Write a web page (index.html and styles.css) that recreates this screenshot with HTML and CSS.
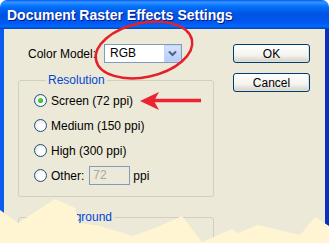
FILE: index.html
```html
<!DOCTYPE html>
<html lang="en">
<head>
    <meta charset="UTF-8">
    <title>Document Raster Effects Settings</title>
    <link rel="stylesheet" href="styles.css">
</head>
<body>
    <div class="window">
        <div class="titlebar">
            <span class="title">Document Raster Effects Settings</span>
        </div>
        <div class="client">
            <div class="main">
                <div class="model-row">
                    <span>Color Model:</span>
                    <div class="combo">
                        <span class="combo-value">RGB</span>
                        <span class="combo-btn">
                            <svg width="17" height="17" viewBox="0 0 17 17">
                                <path d="M5 6.5 L8.5 10 L12 6.5" fill="none" stroke="#4D6185" stroke-width="2"/>
                            </svg>
                        </span>
                    </div>
                </div>
                <fieldset class="group">
                    <legend>Resolution</legend>
                    <div class="radio-row"><span class="radio checked"></span>Screen (72 ppi)</div>
                    <div class="radio-row"><span class="radio"></span>Medium (150 ppi)</div>
                    <div class="radio-row"><span class="radio"></span>High (300 ppi)</div>
                    <div class="radio-row">
                        <span class="radio"></span>Other:
                        <span class="textbox">72</span>
                        <span class="unit">ppi</span>
                    </div>
                </fieldset>
                <fieldset class="group group-bg">
                    <legend>Background</legend>
                </fieldset>
            </div>
            <div class="buttons">
                <button class="btn">OK</button>
                <button class="btn">Cancel</button>
            </div>
        </div>
        <!-- annotations drawn over the screenshot -->
        <svg class="annot" width="329" height="243" viewBox="0 0 329 243">
            <ellipse cx="144" cy="50" rx="49" ry="27" transform="rotate(-12 144 50)" fill="none" stroke="#E5202B" stroke-width="2.5"/>
            <line x1="154" y1="100.5" x2="201" y2="100.5" stroke="#EC2330" stroke-width="3.5"/>
            <polygon points="140,101 159,92 154,101 159,110" fill="#EC2330"/>
            <polygon class="torn" points="0,210 18,223 55,199 75,208 79,223 100,226 133,236 160,226 182,216 202,242 232,229 238,233 258,225 300,235 315,217 329,226 329,243 0,243"/>
        </svg>
    </div>
</body>
</html>
```

FILE: styles.css
```css
body {
    margin: 0;
    background: #fff;
    font-family: "Liberation Sans", Arial, sans-serif;
    font-size: 12px;
    color: #000;
}
.window {
    position: relative;
    width: 329px;
    height: 243px;
    overflow: hidden;
    display: flex;
    flex-direction: column;
}
.titlebar {
    height: 29px;
    flex: none;
    box-sizing: border-box;
    padding-left: 7px;
    display: flex;
    align-items: center;
    border-radius: 7px 7px 0 0;
    background: linear-gradient(#0058EE 0, #3A93FF 2px, #288EFF 3px, #127DFF 5px, #036FFC 7px, #0262EE 10px, #0057E5 13px, #0054E3 16px, #0055EB 20px, #005BF5 24px, #026AFE 26px, #0062EF 27px, #0052D6 28px, #0040AB 29px);
}
.title {
    color: #fff;
    font-weight: bold;
    font-size: 14px;
    text-shadow: 1px 1px #0A1883;
}
.client {
    flex: 1;
    display: flex;
    background: #ECE9D8;
    border-left: 4px solid #0B5BEC;
    border-right: 4px solid #0A2FC4;
    padding: 15px 0 0 14px;
}
.main {
    width: 196px;
    flex: none;
}
.model-row {
    display: flex;
    align-items: center;
    height: 19px;
    margin-left: 10px;
}
.combo {
    margin-left: 8px;
    width: 76px;
    height: 17px;
    display: flex;
    border: 1px solid #7F9DB9;
    background: #fff;
}
.combo-value {
    flex: 1;
    padding-left: 5px;
    line-height: 17px;
}
.combo-btn {
    width: 17px;
    height: 17px;
    box-sizing: border-box;
    background: linear-gradient(#D6E3FE, #B7CBF7);
    border: 1px solid #C3D3FD;
    display: flex;
    align-items: center;
    justify-content: center;
}
.combo-btn svg {
    display: block;
    flex: none;
}
.group {
    margin: 10px 0 0;
    padding: 1px 0 8px 15px;
    border: 1px solid #D0D0BF;
    border-radius: 3px;
    min-width: 0;
}
.group legend {
    margin-left: 12px;
    padding: 0 2px;
    line-height: 14px;
    color: #0046D5;
}
.group-bg {
    margin-top: 13px;
    height: 60px;
}
.radio-row {
    display: flex;
    align-items: center;
    height: 25px;
    gap: 4px;
}
.radio {
    width: 13px;
    height: 13px;
    box-sizing: border-box;
    flex: none;
    border: 1px solid #1C5180;
    border-radius: 50%;
    background: radial-gradient(circle at 60% 60%, #fff 30%, #DCDCD3 100%);
    display: flex;
    align-items: center;
    justify-content: center;
}
.radio.checked::after {
    content: "";
    width: 5px;
    height: 5px;
    border-radius: 50%;
    background: radial-gradient(circle at 40% 40%, #55D751, #21A121);
}
.textbox {
    margin-left: 1px;
    width: 41px;
    height: 19px;
    box-sizing: border-box;
    border: 1px solid #7F9DB9;
    padding-left: 3px;
    line-height: 17px;
    color: #ACA899;
}
.unit {
    margin-left: -1px;
}
.buttons {
    margin-left: 19px;
    width: 77px;
    display: flex;
    flex-direction: column;
    gap: 10px;
}
.btn {
    height: 19px;
    padding: 0;
    font-family: inherit;
    font-size: 12px;
    color: #000;
    border: 1px solid #003C74;
    border-radius: 3px;
    background: linear-gradient(#FFFFFF, #F3F3EF 60%, #D6D0C5);
    box-shadow: inset -1px -1px 0 #E3E0D5;
}
.annot {
    position: absolute;
    top: 0;
    left: 0;
    pointer-events: none;
}
.annot .torn {
    fill: #FFF5D2;
}
```
